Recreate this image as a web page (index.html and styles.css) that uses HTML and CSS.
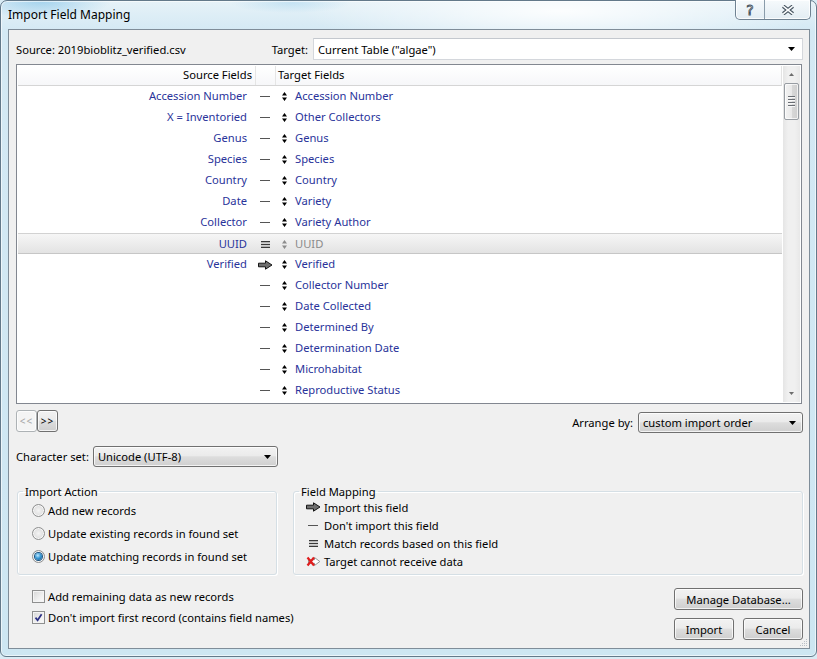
FILE: index.html
```html
<!DOCTYPE html>
<html>
<head>
<meta charset="utf-8">
<title>Import Field Mapping</title>
<link rel="stylesheet" href="styles.css">
</head>
<body>
<svg class="defs" width="0" height="0">
  <symbol id="ud" viewBox="0 0 5 9"><path d="M2.5 0L5 3.6H0Z M0 5.4H5L2.5 9Z"/></symbol>
  <symbol id="arrow" viewBox="0 0 15 10"><path d="M0.5 3.2H7.5V0.8L14 5L7.5 9.2V6.8H0.5Z" fill="#6f6f6f" stroke="#151515" stroke-width="1" stroke-linejoin="miter"/></symbol>
  <symbol id="match" viewBox="0 0 9 7"><rect x="0" y="0" width="9" height="1.3" fill="#3a3a3a"/><rect x="0" y="2.85" width="9" height="1.3" fill="#3a3a3a"/><rect x="0" y="5.7" width="9" height="1.3" fill="#3a3a3a"/></symbol>
  <symbol id="nope" viewBox="0 0 15 11"><path d="M2.5 3.7H8.5V1.5L13.8 5.5L8.5 9.5V7.3H2.5Z" fill="#fff" stroke="#8a8a8a" stroke-width="0.9"/><path d="M1.5 1.5L8 9.5M8 1.5L1.5 9.5" stroke="#e01d1d" stroke-width="2.2"/></symbol>
  <symbol id="tri" viewBox="0 0 7 4"><path d="M0 0H7L3.5 4Z"/></symbol>
</svg>
<div class="window">
  <div class="titlebar">
    <span class="title">Import Field Mapping</span>
    <div class="caption">
      <span class="cap-btn help">?</span>
      <span class="cap-btn close"><svg width="14" height="10" viewBox="0 0 14 10"><path d="M2.2 1.2L11.8 8.8M11.8 1.2L2.2 8.8" stroke="#44525e" stroke-width="3.8"/><path d="M2.2 1.2L11.8 8.8M11.8 1.2L2.2 8.8" stroke="#fbfdfe" stroke-width="1.6"/></svg></span>
    </div>
  </div>
  <div class="client">
    <div class="top-row">
      <span class="source">Source: 2019bioblitz_verified.csv</span>
      <span class="lbl">Target:</span>
      <div class="combo edit target"><span class="combo-text">Current Table ("algae")</span><svg class="drop" width="7" height="4"><use href="#tri"/></svg></div>
    </div>

    <div class="list">
      <div class="list-main">
        <div class="list-head"><span class="h-src">Source Fields</span><span class="h-map"></span><span class="h-tgt">Target Fields</span></div>
        <div class="row"><span class="src">Accession Number</span><span class="map"><i class="dash"></i></span><span class="ud"><svg width="5" height="9"><use href="#ud"/></svg></span><span class="tgt">Accession Number</span></div>
        <div class="row"><span class="src">X = Inventoried</span><span class="map"><i class="dash"></i></span><span class="ud"><svg width="5" height="9"><use href="#ud"/></svg></span><span class="tgt">Other Collectors</span></div>
        <div class="row"><span class="src">Genus</span><span class="map"><i class="dash"></i></span><span class="ud"><svg width="5" height="9"><use href="#ud"/></svg></span><span class="tgt">Genus</span></div>
        <div class="row"><span class="src">Species</span><span class="map"><i class="dash"></i></span><span class="ud"><svg width="5" height="9"><use href="#ud"/></svg></span><span class="tgt">Species</span></div>
        <div class="row"><span class="src">Country</span><span class="map"><i class="dash"></i></span><span class="ud"><svg width="5" height="9"><use href="#ud"/></svg></span><span class="tgt">Country</span></div>
        <div class="row"><span class="src">Date</span><span class="map"><i class="dash"></i></span><span class="ud"><svg width="5" height="9"><use href="#ud"/></svg></span><span class="tgt">Variety</span></div>
        <div class="row"><span class="src">Collector</span><span class="map"><i class="dash"></i></span><span class="ud"><svg width="5" height="9"><use href="#ud"/></svg></span><span class="tgt">Variety Author</span></div>
        <div class="row sel"><span class="src">UUID</span><span class="map"><svg width="9" height="7"><use href="#match"/></svg></span><span class="ud dis"><svg width="5" height="9"><use href="#ud"/></svg></span><span class="tgt dis">UUID</span></div>
        <div class="row"><span class="src">Verified</span><span class="map"><svg width="15" height="10"><use href="#arrow"/></svg></span><span class="ud"><svg width="5" height="9"><use href="#ud"/></svg></span><span class="tgt">Verified</span></div>
        <div class="row"><span class="src"></span><span class="map"><i class="dash"></i></span><span class="ud"><svg width="5" height="9"><use href="#ud"/></svg></span><span class="tgt">Collector Number</span></div>
        <div class="row"><span class="src"></span><span class="map"><i class="dash"></i></span><span class="ud"><svg width="5" height="9"><use href="#ud"/></svg></span><span class="tgt">Date Collected</span></div>
        <div class="row"><span class="src"></span><span class="map"><i class="dash"></i></span><span class="ud"><svg width="5" height="9"><use href="#ud"/></svg></span><span class="tgt">Determined By</span></div>
        <div class="row"><span class="src"></span><span class="map"><i class="dash"></i></span><span class="ud"><svg width="5" height="9"><use href="#ud"/></svg></span><span class="tgt">Determination Date</span></div>
        <div class="row"><span class="src"></span><span class="map"><i class="dash"></i></span><span class="ud"><svg width="5" height="9"><use href="#ud"/></svg></span><span class="tgt">Microhabitat</span></div>
        <div class="row"><span class="src"></span><span class="map"><i class="dash"></i></span><span class="ud"><svg width="5" height="9"><use href="#ud"/></svg></span><span class="tgt">Reproductive Status</span></div>
      </div>
      <div class="vscroll">
        <div class="sb-btn"><svg width="5" height="3" viewBox="0 0 7 4"><path d="M0 4H7L3.5 0Z" fill="#6d6d6d"/></svg></div>
        <div class="thumb"><i></i><i></i><i></i><i></i></div>
        <div class="sb-fill"></div>
        <div class="sb-btn"><svg width="5" height="3" viewBox="0 0 7 4"><path d="M0 0H7L3.5 4Z" fill="#6d6d6d"/></svg></div>
      </div>
    </div>

    <div class="nav-row">
      <span class="navbtn disabled">&lt;&lt;</span>
      <span class="navbtn">&gt;&gt;</span>
      <div class="arrange">
        <span class="lbl">Arrange by:</span>
        <div class="combo btnlike arrange-combo"><span class="combo-text">custom import order</span><svg class="drop" width="7" height="4"><use href="#tri"/></svg></div>
      </div>
    </div>

    <div class="charset-row">
      <span class="lbl">Character set:</span>
      <div class="combo btnlike charset-combo"><span class="combo-text">Unicode (UTF-8)</span><svg class="drop" width="7" height="4"><use href="#tri"/></svg></div>
    </div>

    <div class="groups">
      <fieldset class="group ia">
        <legend>Import Action</legend>
        <div class="opt"><span class="radio"></span>Add new records</div>
        <div class="opt"><span class="radio"></span>Update existing records in found set</div>
        <div class="opt"><span class="radio on"></span>Update matching records in found set</div>
      </fieldset>
      <fieldset class="group fm">
        <legend>Field Mapping</legend>
        <div class="key first"><span class="key-ic"><svg width="15" height="10"><use href="#arrow"/></svg></span>Import this field</div>
        <div class="key"><span class="key-ic"><i class="dash"></i></span>Don't import this field</div>
        <div class="key"><span class="key-ic"><svg width="9" height="7"><use href="#match"/></svg></span>Match records based on this field</div>
        <div class="key"><span class="key-ic"><svg width="15" height="11"><use href="#nope"/></svg></span>Target cannot receive data</div>
      </fieldset>
    </div>

    <div class="bottom">
      <div class="checks">
        <div class="chk-row"><span class="cb"></span>Add remaining data as new records</div>
        <div class="chk-row"><span class="cb on"><svg width="9" height="9" viewBox="0 0 9 9"><path d="M1.5 4.6L3.6 7.2L7.6 1.2" fill="none" stroke="#2b2f84" stroke-width="1.7"/></svg></span>Don't import first record (contains field names)</div>
      </div>
      <div class="buttons">
        <span class="btn manage">Manage Database...</span>
        <div class="btn-row">
          <span class="btn small">Import</span>
          <span class="btn small cancel">Cancel</span>
        </div>
      </div>
    </div>
    <svg class="grip" width="9" height="9" viewBox="0 0 9 9">
      <g fill="#b9bfc6"><rect x="7" y="1" width="1" height="1"/><rect x="5" y="3" width="1" height="1"/><rect x="7" y="3" width="1" height="1"/><rect x="3" y="5" width="1" height="1"/><rect x="5" y="5" width="1" height="1"/><rect x="7" y="5" width="1" height="1"/><rect x="1" y="7" width="1" height="1"/><rect x="3" y="7" width="1" height="1"/><rect x="5" y="7" width="1" height="1"/><rect x="7" y="7" width="1" height="1"/></g>
    </svg>
  </div>
</div>
</body>
</html>
```

FILE: styles.css
```css
* { box-sizing: border-box; }
html, body { margin: 0; padding: 0; }
body {
  width: 817px;
  height: 659px;
  overflow: hidden;
  background: #d9ebf4;
  font-family: "Noto Sans", "Open Sans", sans-serif;
  font-size: 11.2px;
  color: #000;
}
.defs { display: block; width: 0; height: 0; overflow: hidden; }

.window {
  height: 657px;
  display: flex;
  flex-direction: column;
  border: 1px solid #63798a;
  border-radius: 7px 7px 6px 6px;
  background:
    radial-gradient(ellipse 70px 18px at 40px 0px, rgba(110, 185, 228, 0.55), transparent),
    radial-gradient(ellipse 60px 10px at 290px 2px, rgba(140, 200, 235, 0.35), transparent),
    radial-gradient(ellipse 260px 40px at 560px 10px, rgba(255, 255, 255, 0.9), transparent),
    linear-gradient(180deg, #e6f2f8 0px, #d4e9f4 30px, #cde6f2 100%);
  box-shadow: inset 0 0 0 1px rgba(255, 255, 255, 0.6);
}

.titlebar {
  height: 28px;
  display: flex;
  align-items: flex-start;
}
.title {
  padding: 6px 0 0 7px;
  line-height: 16px;
  font-size: 12px;
  color: #000;
}
.caption {
  margin-left: auto;
  margin-right: 5px;
  margin-top: -1px;
  display: flex;
  height: 20px;
  border: 1px solid #6f8292;
  border-top: none;
  border-radius: 0 0 5px 5px;
  background: linear-gradient(#f6fafc, #e3edf3);
  box-shadow: inset 0 0 0 1px rgba(255, 255, 255, 0.8);
}
.cap-btn {
  display: flex;
  align-items: center;
  justify-content: center;
}
.help {
  width: 29px;
  border-right: 1px solid #8a9caa;
  font-family: "DejaVu Sans", sans-serif;
  font-size: 14px;
  color: #fdfdfd;
  -webkit-text-stroke: 0.9px #44525e;
  line-height: 14px;
}
.close { width: 45px; }

.client {
  position: relative;
  flex: 1;
  margin: 0 6px 7px 7px;
  border: 1px solid #7f8d99;
  background: #f0f0f0;
  padding: 8px 6px 0 7px;
  display: flex;
  flex-direction: column;
}

.top-row {
  display: flex;
  align-items: center;
  height: 22px;
}
.source { flex: 1; }
.lbl { white-space: nowrap; }
.top-row .lbl { margin-right: 5px; }

.combo {
  display: flex;
  align-items: center;
  padding-left: 4px;
  white-space: nowrap;
}
.combo-text { flex: 1; }
.drop { margin-right: 7px; fill: #000; }
.combo.edit {
  background: #fff;
  border: 1px solid #d4d7dc;
  border-top-color: #c4c8ce;
}
.target { width: 490px; height: 22px; }
.combo.btnlike {
  border: 1px solid #707070;
  border-radius: 3px;
  background: linear-gradient(#f2f2f2 0%, #ebebeb 45%, #dddddd 52%, #cfcfcf 100%);
  box-shadow: inset 0 0 0 1px rgba(255, 255, 255, 0.75);
}
.combo.btnlike .drop { margin-right: 6px; }

.list {
  margin-top: 4px;
  height: 340px;
  margin-right: 1px;
  border: 1px solid #828790;
  background: #fff;
  padding: 1px;
  display: flex;
}
.list-main { flex: 1; min-width: 0; }
.list-head {
  display: grid;
  grid-template-columns: 238px 20px 1fr;
  height: 20px;
  line-height: 18px;
  background: linear-gradient(#ffffff, #f6f7f9);
  border-bottom: 1px solid #d5d5d5;
  border-right: 1px solid #e3e3e3;
}
.h-src { text-align: right; padding-right: 3px; border-right: 1px solid #e5e5e5; }
.h-map { border-right: 1px solid #e5e5e5; }
.h-tgt { padding-left: 2px; }

.row {
  display: grid;
  grid-template-columns: 232px 30px 15px 1fr;
  height: 21px;
  padding-bottom: 2px;
  align-items: center;
  color: #29339a;
  white-space: nowrap;
}
.row.sel {
  background: linear-gradient(#f6f6f6, #e3e3e3);
  border-top: 1px solid #d2d2d2;
  border-bottom: 1px solid #c6c6c6;
  padding-bottom: 1px;
}
.src { text-align: right; padding-right: 3px; }
.map { display: flex; justify-content: center; align-items: center; padding-top: 2px; }
.dash { display: block; width: 10px; height: 1px; background: #555; }
.ud { display: flex; align-items: center; padding-left: 2px; padding-top: 2px; fill: #000; }
.ud.dis { fill: #8c8c8c; }
.tgt.dis { color: #8a8a8a; }

.vscroll {
  width: 17px;
  margin-left: 1px;
  display: flex;
  flex-direction: column;
  background: linear-gradient(90deg, #e5e5e5, #f0f0f0 30%, #f0f0f0 70%, #e8e8e8);
}
.sb-btn {
  height: 17px;
  display: flex;
  align-items: center;
  justify-content: center;
}
.thumb {
  height: 37px;
  margin: 0 1px;
  border: 1px solid #979ca2;
  border-radius: 2px;
  background: linear-gradient(90deg, #f3f3f3 0%, #e9e9e9 50%, #d8d8d8 51%, #cfcfcf 100%);
  box-shadow: inset 0 0 0 1px rgba(255, 255, 255, 0.7);
  display: flex;
  flex-direction: column;
  align-items: center;
  justify-content: center;
  gap: 1px;
}
.thumb i {
  display: block;
  width: 7px;
  height: 1px;
  background: #6a6e74;
  border-bottom: 1px solid #f8f8f8;
  box-sizing: content-box;
}
.sb-fill { flex: 1; }

.nav-row {
  display: flex;
  align-items: flex-start;
  margin-top: 6px;
  height: 23px;
}
.navbtn {
  width: 21px;
  height: 22px;
  display: flex;
  align-items: center;
  justify-content: center;
  font-size: 10px;
  letter-spacing: 1px;
  border: 1px solid #707070;
  border-radius: 3px;
  background: linear-gradient(#f2f2f2 0%, #ebebeb 45%, #dddddd 52%, #cfcfcf 100%);
  box-shadow: inset 0 0 0 1px rgba(255, 255, 255, 0.75);
}
.navbtn.disabled {
  border-color: #adb2b5;
  background: #f4f4f4;
  color: #a5a5a5;
}
.arrange {
  margin-left: auto;
  margin-top: 2px;
  display: flex;
  align-items: center;
}
.arrange .lbl { margin-right: 5px; }
.arrange-combo { width: 165px; height: 21px; }

.charset-row {
  display: flex;
  align-items: center;
  margin-top: 13px;
}
.charset-row .lbl { margin-right: 4px; }
.charset-combo { width: 185px; height: 21px; }

.groups {
  display: flex;
  margin-top: 17px;
}
.group {
  height: 91px;
  margin: 0;
  padding: 0 0 3px 0;
  border: 1px solid #d5dfe5;
  border-radius: 3px;
  box-shadow: inset 1px 1px 0 #fff, 1px 1px 0 #fff;
  min-width: 0;
}
.group legend {
  margin-left: 5px;
  padding: 0 2px;
  line-height: 15px;
}
.ia { width: 260px; margin-left: 1px; }
.fm { flex: 1; margin-left: 16px; }

.opt {
  display: flex;
  align-items: center;
  height: 23px;
  padding-left: 14px;
}
.radio {
  width: 13px;
  height: 13px;
  margin-right: 3px;
  border-radius: 50%;
  border: 1px solid #8e8f8f;
  background: radial-gradient(circle at 50% 50%, #f4f4f4 0, #e2e2e2 55%, #cfcfcf 100%);
  box-shadow: inset 0 0 0 1px #f7f7f7;
  display: flex;
  align-items: center;
  justify-content: center;
}
.radio.on::after {
  content: "";
  width: 7px;
  height: 7px;
  border-radius: 50%;
  background: radial-gradient(circle at 40% 35%, #bfe9ff 0, #3a9ad6 45%, #0f4f86 100%);
  box-shadow: 0 0 0 1px #1c5480;
}

.key {
  display: flex;
  align-items: center;
  height: 18px;
  padding-left: 11px;
}
.key.first { margin-top: -1px; }
.key-ic {
  width: 16px;
  margin-right: 3px;
  display: flex;
  align-items: center;
  justify-content: center;
}

.bottom {
  display: flex;
  align-items: flex-start;
}
.checks { margin-top: 11px; }
.chk-row {
  display: flex;
  align-items: center;
  height: 21px;
  padding-left: 16px;
}
.cb {
  width: 13px;
  height: 13px;
  margin-right: 3px;
  border: 1px solid #8e8f8f;
  background: linear-gradient(135deg, #d6d6d6 0%, #f0f0f0 60%, #fbfbfb 100%);
  box-shadow: inset 0 0 0 1px #f4f4f4;
  display: flex;
  align-items: center;
  justify-content: center;
}
.buttons {
  margin-left: auto;
  margin-top: 13px;
  display: flex;
  flex-direction: column;
}
.btn {
  height: 22px;
  display: flex;
  align-items: center;
  justify-content: center;
  border: 1px solid #707070;
  border-radius: 3px;
  background: linear-gradient(#f2f2f2 0%, #ebebeb 45%, #dddddd 52%, #cfcfcf 100%);
  box-shadow: inset 0 0 0 1px rgba(255, 255, 255, 0.75);
}
.manage { width: 129px; }
.btn-row { display: flex; margin-top: 8px; }
.small { width: 60px; }
.cancel { margin-left: 9px; }

.grip {
  position: absolute;
  right: 1px;
  bottom: 1px;
}
```
